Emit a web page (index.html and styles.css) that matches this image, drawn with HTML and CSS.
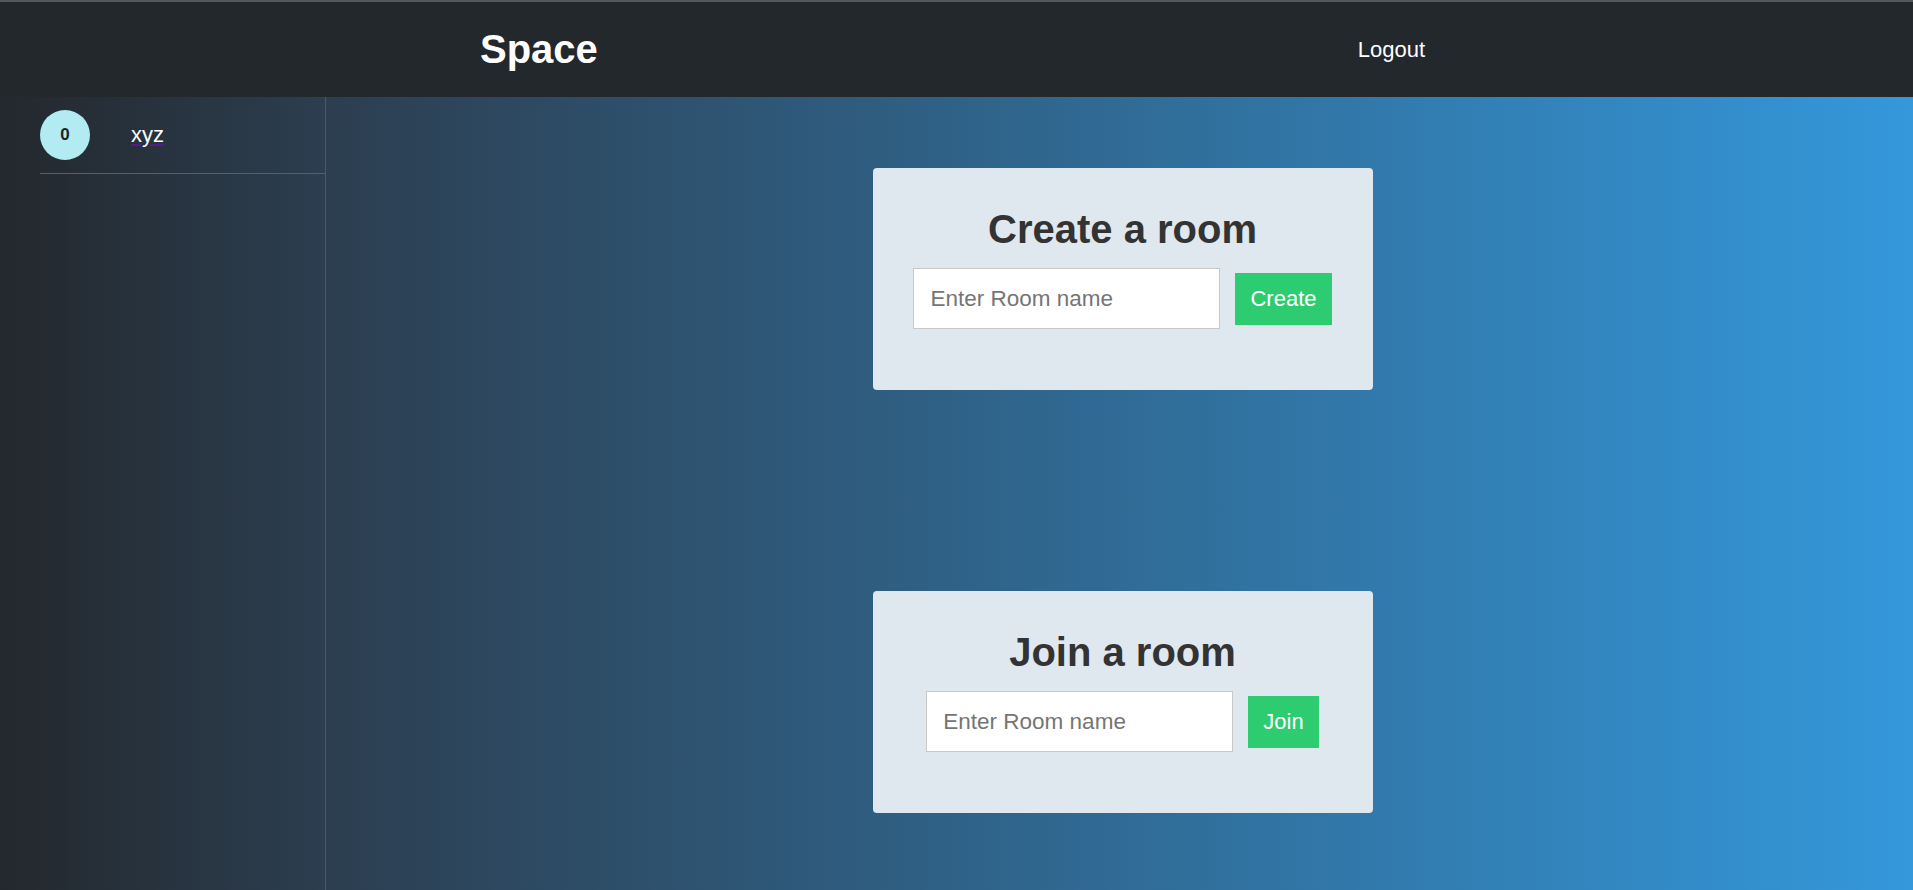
FILE: index.html
```html
<!DOCTYPE html>
<html lang="en">
<head>
<meta charset="utf-8">
<title>Space</title>
<link rel="stylesheet" href="styles.css">
</head>
<body>
<header class="nav">
  <h1 class="brand">Space</h1>
  <a class="logout" href="#">Logout</a>
</header>
<div class="layout">
  <aside class="sidebar">
    <div class="user">
      <div class="avatar">0</div>
      <a class="user-link" href="#"><span class="user-name">xyz</span></a>
    </div>
  </aside>
  <main class="main">
    <section class="card">
      <h2 class="card-title">Create a room</h2>
      <div class="row">
        <input class="room-input" type="text" placeholder="Enter Room name">
        <button class="btn">Create</button>
      </div>
    </section>
    <section class="card">
      <h2 class="card-title">Join a room</h2>
      <div class="row">
        <input class="room-input" type="text" placeholder="Enter Room name">
        <button class="btn">Join</button>
      </div>
    </section>
  </main>
</div>
</body>
</html>
```
FILE: styles.css
```css
* { box-sizing: border-box; }
html, body { height: 100%; }
body {
  margin: 0;
  font-family: "Liberation Sans", Arial, sans-serif;
  overflow: hidden;
}
.nav {
  height: 97px;
  border-top: 2px solid #555759;
  background: #23282d;
  display: flex;
  align-items: center;
  justify-content: space-around;
  padding: 0 108px 0 100px;
}
.brand {
  margin: 0;
  color: #fff;
  font-size: 40px;
  font-weight: bold;
}
.logout {
  color: #fff;
  text-decoration: none;
  font-size: 22px;
}
.layout {
  display: flex;
  height: calc(100vh - 97px);
}
.sidebar {
  width: 326px;
  flex: none;
  background: linear-gradient(to right, #23282d, #2c3e50);
  border-right: 1px solid #4c5867;
}
.user {
  margin-left: 40px;
  padding: 13px 0;
  display: flex;
  align-items: center;
  border-bottom: 1px solid #56606c;
}
.avatar {
  width: 50px;
  height: 50px;
  border-radius: 50%;
  background: #b2ebf2;
  color: #222;
  font-weight: bold;
  font-size: 17px;
  display: flex;
  align-items: center;
  justify-content: center;
}
.user-link {
  margin-left: 41px;
  color: #551a8b;
  text-decoration: underline;
  font-size: 22px;
}
.user-name { color: #fff; }
.main {
  flex: 1;
  background: linear-gradient(to right, #2c3e50, #3498db);
  display: flex;
  flex-direction: column;
  align-items: center;
  padding-top: 71px;
  padding-left: 6px;
  gap: 201px;
}
.card {
  width: 500px;
  height: 222px;
  background: #dfe7ef;
  border-radius: 4px;
  padding-top: 38px;
  text-align: center;
}
.card-title {
  margin: 0 0 16px;
  font-size: 40px;
  line-height: 46px;
  font-weight: bold;
  color: #333;
}
.row {
  display: flex;
  justify-content: center;
  align-items: center;
  gap: 15px;
}
.room-input {
  width: 307px;
  height: 61px;
  border: 1px solid #c8c8c8;
  background: #fff;
  padding: 0 14px 0 16px;
  font-family: "Liberation Sans", Arial, sans-serif;
  font-size: 22.5px;
  outline: none;
}
.room-input::placeholder { color: #757575; }
.btn {
  height: 52px;
  padding: 0 15px;
  border: none;
  background: #2ecc71;
  color: #fff;
  font-family: "Liberation Sans", Arial, sans-serif;
  font-size: 22px;
}
```
